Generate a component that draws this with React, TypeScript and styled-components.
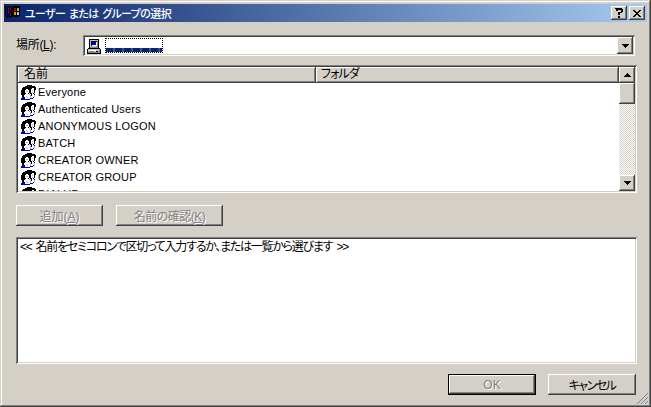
import styled, { createGlobalStyle } from "styled-components";

const FACE = "#d4d0c8";
const raised = `inset -1px -1px #404040, inset 1px 1px #fff, inset -2px -2px #808080, inset 2px 2px ${FACE}`;
const sunken = `inset 1px 1px #808080, inset -1px -1px #fff, inset 2px 2px #404040, inset -2px -2px ${FACE}`;

const GlobalStyle = createGlobalStyle`
  html, body {
    margin: 0;
    padding: 0;
    background: ${FACE};
  }
  * {
    box-sizing: border-box;
  }
`;

const Dialog = styled.div`
  width: 651px;
  height: 407px;
  padding: 4px;
  position: relative;
  overflow: hidden;
  display: flex;
  flex-direction: column;
  background: ${FACE};
  font-family: "Liberation Sans", "Noto Sans CJK JP", sans-serif;
  font-size: 12px;
  font-feature-settings: "palt";
  color: #000;
  box-shadow: inset -1px -1px #404040, inset 1px 1px ${FACE}, inset -2px -2px #808080, inset 2px 2px #fff;
`;

const TitleBar = styled.div`
  height: 18px;
  flex: none;
  display: flex;
  align-items: center;
  padding: 0 2px 0 1px;
  color: #fff;
  font-weight: 500;
  background: linear-gradient(90deg, #0a246a, #a6caf0);
`;

const TitleText = styled.span`
  margin-left: 4px;
  flex: 1;
  font-size: 11px;
  letter-spacing: -0.6px;
  word-spacing: 1px;
  white-space: pre;
`;

const TitleButton = styled.button`
  width: 16px;
  height: 14px;
  margin-left: 2px;
  padding: 0;
  border: 0;
  display: flex;
  align-items: center;
  justify-content: center;
  background: ${FACE};
  box-shadow: ${raised};
`;

const Body = styled.div`
  flex: 1;
  display: flex;
  flex-direction: column;
  padding: 13px 10px 0 12px;
`;

const LocationRow = styled.div`
  display: flex;
  align-items: center;
  height: 21px;
`;

const LocationLabel = styled.label`
  width: 67px;
  flex: none;
  padding-bottom: 4px;
  letter-spacing: -0.3px;
`;

const Combo = styled.div`
  flex: 1;
  height: 21px;
  margin-right: 2px;
  padding: 2px;
  display: flex;
  align-items: center;
  background: #fff;
  box-shadow: ${sunken};
`;

const ComboValue = styled.div`
  flex: 1;
  display: flex;
  align-items: center;
  padding-left: 1px;
`;

const RedactedValue = styled.div`
  width: 58px;
  height: 15px;
  margin-left: 3px;
  border: 1px dotted #000;
  background:
    repeating-linear-gradient(90deg, #0a246a 0 7px, #3a5590 7px 9px) bottom / 100% 4px no-repeat,
    #fff;
`;

const ScrollButton = styled.div`
  width: 16px;
  height: ${(p) => p.$h || 16}px;
  flex: none;
  display: flex;
  align-items: center;
  justify-content: center;
  background: ${FACE};
  box-shadow: ${raised};
`;

const ListBox = styled.div`
  height: 128px;
  margin-top: 9px;
  padding: 2px;
  display: flex;
  background: #fff;
  box-shadow: ${sunken};
`;

const ListMain = styled.div`
  flex: 1;
  min-width: 0;
  display: flex;
  flex-direction: column;
  overflow: hidden;
`;

const ListHeader = styled.div`
  height: 16px;
  flex: none;
  display: flex;
`;

const HeaderCell = styled.div`
  width: ${(p) => p.$w}px;
  flex: ${(p) => (p.$w ? "none" : 1)};
  padding-left: ${(p) => (p.$w ? 6 : 5)}px;
  line-height: 14px;
  letter-spacing: ${(p) => (p.$w ? 0 : -1)}px;
  background: ${FACE};
  box-shadow: inset -1px -1px #404040, inset 1px 1px #fff, inset -2px -2px #808080;
`;

const Rows = styled.div`
  flex: 1;
  overflow: hidden;
  padding: 1px 0 0 2px;
`;

const Row = styled.div`
  height: 17px;
  display: flex;
  align-items: center;
  gap: 2px;
  font-size: 11px;
  letter-spacing: 0.2px;
  white-space: nowrap;
`;

const RowLabel = styled.span`
  margin-bottom: 2px;
`;

const ScrollBar = styled.div`
  width: 16px;
  flex: none;
  display: flex;
  flex-direction: column;
`;

const ScrollTrack = styled.div`
  flex: 1;
  background: repeating-conic-gradient(${FACE} 0 25%, #fff 0 50%) 0 0 / 2px 2px;
`;

const ActionRow = styled.div`
  display: flex;
  gap: 13px;
  margin-top: 12px;
`;

const Button = styled.button`
  width: ${(p) => p.$w}px;
  height: 21px;
  padding: 0;
  border: 0;
  font: inherit;
  font-feature-settings: inherit;
  letter-spacing: ${(p) => p.$spacing || 0}px;
  color: ${(p) => (p.disabled ? "#808080" : "#000")};
  text-shadow: ${(p) => (p.disabled ? "1px 1px #fff" : "none")};
  background: ${FACE};
  box-shadow: ${(p) =>
    p.$default
      ? "inset 0 0 0 1px #000, inset -2px -2px #404040, inset 2px 2px #fff, inset -3px -3px #808080"
      : raised};
`;

const Accel = styled.span`
  text-decoration: underline;
`;

const NamesBox = styled.div`
  height: 127px;
  margin-top: 11px;
  padding: 3px 4px;
  background: #fff;
  line-height: 15px;
  letter-spacing: -1.25px;
  word-spacing: 2px;
  box-shadow: ${sunken};
`;

const Footer = styled.div`
  display: flex;
  justify-content: flex-end;
  gap: 12px;
  margin-top: 10px;
  padding-right: 1px;
`;

const SizeGrip = styled.svg`
  position: absolute;
  right: 2px;
  bottom: 2px;
`;

const PALETTE: Record<string, string> = {
  K: "#000",
  W: "#fff",
  B: "#0000c0",
  N: "#000080",
  L: "#a0b8f0",
  G: "#808080",
  S: "#c0c0c0",
  R: "#c00000",
  Y: "#c0b000",
  C: "#2040ff",
};

function PixelIcon({ rows }: { rows: string[] }) {
  return (
    <svg width={16} height={16} viewBox="0 0 16 16" shapeRendering="crispEdges" style={{ flex: "none" }}>
      {rows.flatMap((row, y) =>
        row.split("").map((c, x) =>
          PALETTE[c] ? <rect key={`${x}-${y}`} x={x} y={y} width={1} height={1} fill={PALETTE[c]} /> : null
        )
      )}
    </svg>
  );
}

const GROUP_ICON = [
  ".......KKKKK....",
  ".....KKKKKKKKKK.",
  "...KKKKKKKKKKKKK",
  "..KKKKKKKKKKWWKK",
  "..KKKKWWKKKWWWKK",
  ".KKKKWWWWKKWLWK.",
  ".KKKKWLLWKKWWWK.",
  ".KKKKWWWWKKWLWK.",
  ".KKKKKWWKWKKWK..",
  ".KKKKWWWWLWKWWK.",
  "..KKWWWWWWLKWWL.",
  "..KKWWLWWWLWWWL.",
  "..BBKWWLWWLWWB..",
  ".BBBBWWWWWBBB...",
  ".NNBBBBBBB......",
  "................",
];

const COMPUTER_ICON = [
  "................",
  "...KKKKKKKKKK...",
  "...KSSSSSSSSK...",
  "...KSKKKKKKGK...",
  "...KSKBBBBWGK...",
  "...KSKBBBBWGK...",
  "...KSKBBBBWGK...",
  "...KSKWWWWWGK...",
  "...KSSSSSSSGK...",
  "...KGGGGGGGGK...",
  "..KKKKKKKKKKKK..",
  ".KSSSSSSSSSSSSK.",
  ".KSWWWWWWWSSSGK.",
  ".KSGGGGGSSKKSGK.",
  ".KGGGGGGGGGGGGK.",
  ".KKKKKKKKKKKKKK.",
];

const APP_ICON = [
  "................",
  "KK.K.K.KKKKKKKK.",
  "K.K.K.K.KKKKKKK.",
  "KBKRKRKKKRRKYYK.",
  "KBKRKRKKKRRKYYK.",
  "K.K.K.K.KRRKYYK.",
  "KBKRKBKKKKKKKKK.",
  "KBKRKBKKKYYKSSK.",
  "K.K.K.K.KYYKSSK.",
  "KBKBKRKKKYYKSSK.",
  "KBKBKRKKKKKKKKK.",
  ".KKKKKKK.KKKKK..",
  "..K.K.K.........",
  "................",
  "................",
  "................",
];

const PRINCIPALS = [
  "Everyone",
  "Authenticated Users",
  "ANONYMOUS LOGON",
  "BATCH",
  "CREATOR OWNER",
  "CREATOR GROUP",
  "DIALUP",
];

function Arrow({ down }: { down?: boolean }) {
  return (
    <svg width={7} height={4} viewBox="0 0 7 4" shapeRendering="crispEdges">
      <path d={down ? "M0 0h7v1H6v1H5v1H4v1H3V3H2V2H1V1H0z" : "M3 0h1v1h1v1h1v1h1v1H0V3h1V2h1V1h1z"} fill="#000" />
    </svg>
  );
}

export default function App() {
  return (
    <Dialog>
      <GlobalStyle />
      <TitleBar>
        <PixelIcon rows={APP_ICON} />
        <TitleText>ユーザー または グループの選択</TitleText>
        <TitleButton aria-label="help">
          <svg width={8} height={10} viewBox="0 0 8 10" shapeRendering="crispEdges">
            <path d="M1 0h6v1h1v3H7v1H5v2H3V4h3V2H3v1H1V1H0V0zM3 8h2v2H3z" fill="#000" />
          </svg>
        </TitleButton>
        <TitleButton aria-label="close">
          <svg width={8} height={7} viewBox="0 0 8 7" shapeRendering="crispEdges">
            <path d="M0 0h2v1h1v1h2V1h1V0h2v1H7v1H6v1H5v1h1v1h1v1h1v1H6V6H5V5H3v1H2v1H0V6h1V5h1V4h1V3H2V2H1V1H0z" fill="#000" />
          </svg>
        </TitleButton>
      </TitleBar>
      <Body>
        <LocationRow>
          <LocationLabel>
            場所(<Accel>L</Accel>):
          </LocationLabel>
          <Combo>
            <ComboValue>
              <PixelIcon rows={COMPUTER_ICON} />
              <RedactedValue />
            </ComboValue>
            <ScrollButton $h={17}>
              <Arrow down />
            </ScrollButton>
          </Combo>
        </LocationRow>
        <ListBox>
          <ListMain>
            <ListHeader>
              <HeaderCell $w={298}>名前</HeaderCell>
              <HeaderCell>フォルダ</HeaderCell>
            </ListHeader>
            <Rows>
              {PRINCIPALS.map((name) => (
                <Row key={name}>
                  <PixelIcon rows={GROUP_ICON} />
                  <RowLabel>{name}</RowLabel>
                </Row>
              ))}
            </Rows>
          </ListMain>
          <ScrollBar>
            <ScrollButton>
              <Arrow />
            </ScrollButton>
            <ScrollButton $h={21} />
            <ScrollTrack />
            <ScrollButton>
              <Arrow down />
            </ScrollButton>
          </ScrollBar>
        </ListBox>
        <ActionRow>
          <Button $w={87} disabled>
            追加(<Accel>A</Accel>)
          </Button>
          <Button $w={107} $spacing={-0.5} disabled>
            名前の確認(<Accel>K</Accel>)
          </Button>
        </ActionRow>
        <NamesBox>&lt;&lt; 名前をセミコロンで区切って入力するか、または一覧から選びます &gt;&gt;</NamesBox>
        <Footer>
          <Button $w={88} $default disabled>
            OK
          </Button>
          <Button $w={88} $spacing={-1.5}>
            キャンセル
          </Button>
        </Footer>
      </Body>
      <SizeGrip width={13} height={13} viewBox="0 0 13 13" shapeRendering="crispEdges">
        <path d="M12 1v1h-1v1h-1v1H9v1H8v1H7v1H6v1H5v1H4v1H3v1H2v1H1v-1h1v-1h1V9h1V8h1V7h1V6h1V5h1V4h1V3h1V2h1V1z" fill="#808080" />
        <path d="M12 5v1h-1v1h-1v1H9v1H8v1H7v1H6v1H5v-1h1v-1h1V9h1V8h1V7h1V6h1V5z" fill="#808080" />
        <path d="M12 9v1h-1v1h-1v1H9v-1h1v-1h1V9z" fill="#808080" />
      </SizeGrip>
    </Dialog>
  );
}
